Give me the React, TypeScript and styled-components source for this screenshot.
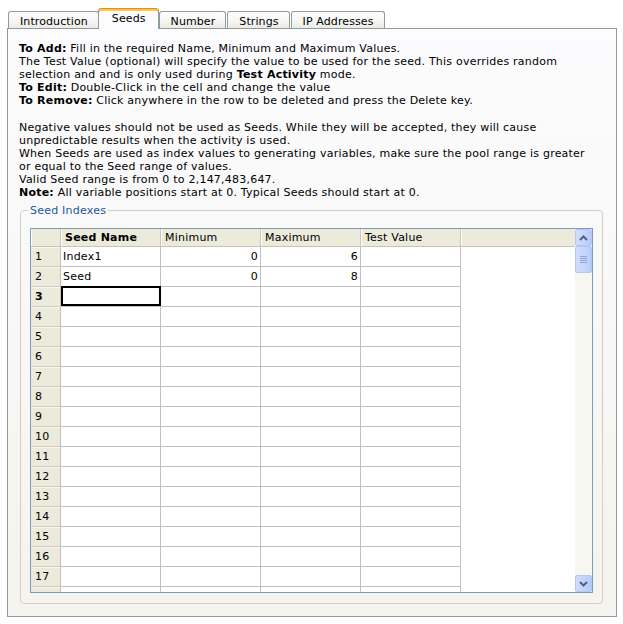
import React from 'react';
import styled, { createGlobalStyle, css } from 'styled-components';

const Global = createGlobalStyle`
  html, body { margin: 0; padding: 0; background: #ffffff; }
  body {
    font-family: "DejaVu Sans", Verdana, sans-serif;
    font-size: 11px;
    letter-spacing: 0.22px;
    color: #000000;
  }
  * { box-sizing: border-box; }
`;

const Page = styled.div`
  width: 623px;
  height: 624px;
  padding: 8px 0 0 7px;
`;

const TabStrip = styled.div`
  display: flex;
  align-items: flex-end;
  height: 20px;
  padding-left: 1px;
`;

const Tab = styled.div<{ $active?: boolean }>`
  position: relative;
  display: flex;
  align-items: center;
  justify-content: center;
  height: 17px;
  padding: 2px 10px 0 11px;
  margin-right: 1px;
  border: 1px solid #919b9c;
  border-bottom: none;
  border-radius: 3px 3px 0 0;
  background: linear-gradient(to bottom, #ffffff 0%, #f6f6f3 55%, #ebeae4 100%);
  letter-spacing: 0.1px;
  white-space: nowrap;
  ${(p) =>
    p.$active &&
    css`
      z-index: 1;
      height: 21px;
      margin: 0 0 -1px -2px;
      padding: 0 12px 2px 13px;
      background: #fcfcfe;
      border-top: 1px solid #e68b2c;
      box-shadow: inset 0 2px 0 #ffc73c;
    `}
`;

const Panel = styled.div`
  width: 610px;
  height: 589px;
  border: 1px solid #919b9c;
  background: linear-gradient(to bottom, #fcfcfe 0%, #f4f3ee 100%);
  padding: 13px 12px 0 11px;
  display: flex;
  flex-direction: column;
`;

const Para = styled.div<{ $gap?: boolean }>`
  line-height: 13px;
  white-space: nowrap;
  margin-top: ${(p) => (p.$gap ? '14px' : '0')};
`;

const Line = styled.div`
  display: block;
`;

const GroupBox = styled.fieldset`
  margin: 5px 1px 0;
  padding: 11px 9px 10px;
  border: 1px solid #d0d0bf;
  border-radius: 4px;
  min-width: 0;
`;

const Caption = styled.legend`
  padding: 0 2px;
  margin-left: -2px;
  color: #1f559c;
  line-height: 13px;
`;

const Grid = styled.div`
  display: flex;
  height: 365px;
  border: 1px solid #7f9db9;
  background: #ffffff;
`;

const Table = styled.div`
  flex: 1;
  overflow: hidden;
  display: grid;
  grid-template-columns: 30px repeat(4, 100px) 1fr;
  grid-template-rows: 18px;
  grid-auto-rows: 20px;
  align-content: start;
`;

const HeadCell = styled.div<{ $bold?: boolean; $filler?: boolean }>`
  display: flex;
  align-items: center;
  padding-left: 4px;
  background: #ebeadb;
  border-bottom: 1px solid #c7c4b4;
  border-right: ${(p) => (p.$filler ? 'none' : '1px solid #c9c6b6')};
  box-shadow: inset 1px 0 0 #ffffff;
  font-weight: ${(p) => (p.$bold ? 'bold' : 'normal')};
  white-space: nowrap;
`;

const RowHead = styled.div<{ $current?: boolean }>`
  display: flex;
  align-items: center;
  padding-left: 4px;
  background: #ebeadb;
  border-bottom: 1px solid #cfccbe;
  border-right: 1px solid #c0c0c0;
  box-shadow: inset 0 1px 0 #f8f7f1;
  font-weight: ${(p) => (p.$current ? 'bold' : 'normal')};
`;

const Cell = styled.div<{ $num?: boolean; $active?: boolean }>`
  position: relative;
  display: flex;
  align-items: center;
  justify-content: ${(p) => (p.$num ? 'flex-end' : 'flex-start')};
  padding: 0 2px;
  border-right: 1px solid #c0c0c0;
  border-bottom: 1px solid #c0c0c0;
  white-space: nowrap;
  ${(p) =>
    p.$active &&
    css`
      &::after {
        content: '';
        position: absolute;
        top: -1px;
        left: 0;
        right: -1px;
        bottom: 0;
        border: 2px solid #000000;
      }
    `}
`;

const Filler = styled.div`
  background: #ffffff;
`;

const ScrollBar = styled.div`
  width: 17px;
  display: flex;
  flex-direction: column;
  background: #f7f7f2;
`;

const ScrollButton = styled.div`
  height: 17px;
  display: flex;
  align-items: center;
  justify-content: center;
  border: 1px solid #b4c6f3;
  border-radius: 2px;
  background: linear-gradient(to right, #d0dcfd 0%, #c3d3fc 60%, #b8cbf8 100%);
`;

const Thumb = styled.div`
  height: 27px;
  display: flex;
  align-items: center;
  justify-content: center;
  border: 1px solid #b4c6f3;
  border-radius: 2px;
  background: linear-gradient(to right, #d0dcfd 0%, #c6d5fc 60%, #bacdf8 100%);
`;

const Track = styled.div`
  flex: 1;
`;

const Chevron = ({ up }: { up?: boolean }) => (
  <svg width="9" height="6" viewBox="0 0 9 6">
    <path
      d={up ? 'M1 5 L4.5 1.5 L8 5' : 'M1 1 L4.5 4.5 L8 1'}
      fill="none"
      stroke="#4d6185"
      strokeWidth="2"
    />
  </svg>
);

const Grip = () => (
  <svg width="7" height="8" viewBox="0 0 7 8">
    {[0, 2, 4, 6].map((y) => (
      <rect key={y} x="0" y={y} width="7" height="1" fill="#8ea3dc" />
    ))}
  </svg>
);

type Row = { name: string; min: string; max: string; test: string };

const rows: Row[] = [
  { name: 'Index1', min: '0', max: '6', test: '' },
  { name: 'Seed', min: '0', max: '8', test: '' },
];

const tabs = ['Introduction', 'Seeds', 'Number', 'Strings', 'IP Addresses'];

export default function App() {
  const totalRows = 18;
  const labelledRows = 17;
  return (
    <Page>
      <Global />
      <TabStrip>
        {tabs.map((t) => (
          <Tab key={t} $active={t === 'Seeds'}>
            {t}
          </Tab>
        ))}
      </TabStrip>
      <Panel>
        <Para>
          <Line>
            <b>To Add:</b> Fill in the required Name, Minimum and Maximum Values.
          </Line>
          <Line>
            The Test Value (optional) will specify the value to be used for the seed. This overrides random
          </Line>
          <Line>
            selection and and is only used during <b>Test Activity</b> mode.
          </Line>
          <Line>
            <b>To Edit:</b> Double-Click in the cell and change the value
          </Line>
          <Line>
            <b>To Remove:</b> Click anywhere in the row to be deleted and press the Delete key.
          </Line>
        </Para>
        <Para $gap>
          <Line>
            Negative values should not be used as Seeds. While they will be accepted, they will cause
          </Line>
          <Line>unpredictable results when the activity is used.</Line>
          <Line>
            When Seeds are used as index values to generating variables, make sure the pool range is greater
          </Line>
          <Line>or equal to the Seed range of values.</Line>
          <Line>Valid Seed range is from 0 to 2,147,483,647.</Line>
          <Line>
            <b>Note:</b> All variable positions start at 0. Typical Seeds should start at 0.
          </Line>
        </Para>
        <GroupBox>
          <Caption>Seed Indexes</Caption>
          <Grid>
            <Table>
              <HeadCell />
              <HeadCell $bold>Seed Name</HeadCell>
              <HeadCell>Minimum</HeadCell>
              <HeadCell>Maximum</HeadCell>
              <HeadCell>Test Value</HeadCell>
              <HeadCell $filler />
              {Array.from({ length: totalRows }, (_, i) => {
                const r = rows[i];
                return (
                  <React.Fragment key={i}>
                    <RowHead $current={i === 2}>{i < labelledRows ? i + 1 : ''}</RowHead>
                    <Cell $active={i === 2}>{r ? r.name : ''}</Cell>
                    <Cell $num>{r ? r.min : ''}</Cell>
                    <Cell $num>{r ? r.max : ''}</Cell>
                    <Cell $num>{r ? r.test : ''}</Cell>
                    <Filler />
                  </React.Fragment>
                );
              })}
            </Table>
            <ScrollBar>
              <ScrollButton>
                <Chevron up />
              </ScrollButton>
              <Thumb>
                <Grip />
              </Thumb>
              <Track />
              <ScrollButton>
                <Chevron />
              </ScrollButton>
            </ScrollBar>
          </Grid>
        </GroupBox>
      </Panel>
    </Page>
  );
}
